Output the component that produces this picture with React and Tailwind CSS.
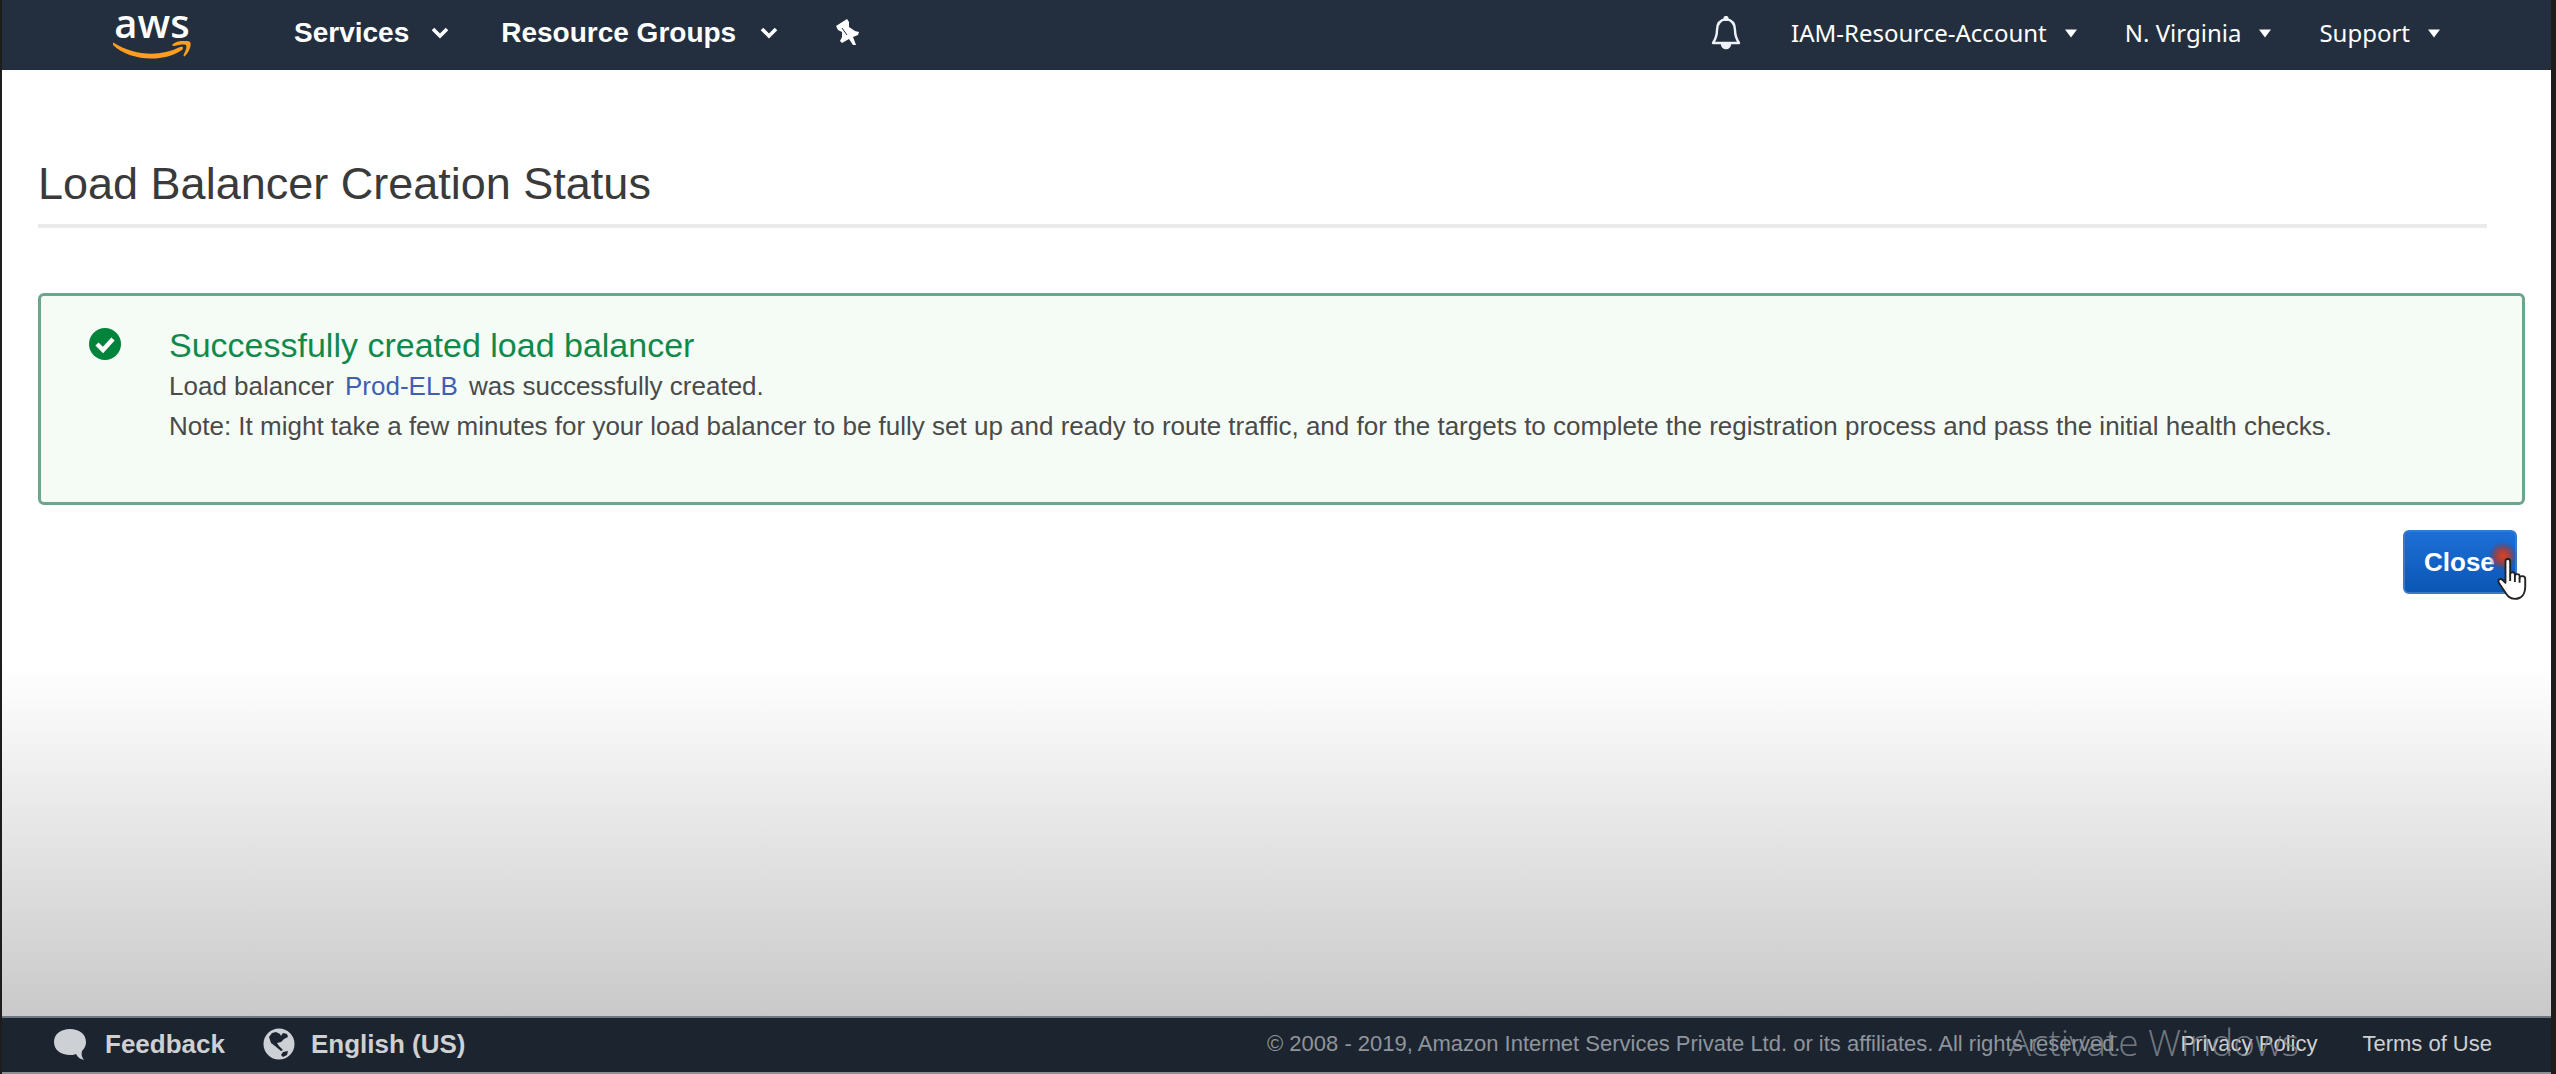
import React from "react";

function Chevron() {
  return (
    <svg viewBox="0 0 18 12" className="h-3 w-[18px]" fill="none" stroke="white" strokeWidth="3.6" aria-hidden="true">
      <path d="M2 2 L9 9 L16 2" />
    </svg>
  );
}

function Caret() {
  return (
    <svg viewBox="0 0 12 9" className="h-[9px] w-3" fill="white" aria-hidden="true">
      <path d="M0 0.5 H12 L6 8.5 Z" />
    </svg>
  );
}

function AwsLogo() {
  return (
    <span className="flex w-[78px] flex-col items-center">
      <span className='h-9 font-["Open_Sans",sans-serif] text-[40px] font-semibold leading-9 text-white'>aws</span>
      <svg viewBox="0 0 78 20" className="h-5 w-[78px]" aria-hidden="true">
        <path d="M1 2 C22 15 47 16 67 6 C70 5 71 7 69 9 C50 22 17 20 0 4 C-1 2 0 1 1 2 Z" fill="#ff9d1e" />
        <path d="M60 3 C65 -1 75 -1 77 1 C79 4 76 11 72 15 C71 16 70 15 71 13 C73 9 74 6 73 4 C71 3 65 4 61 5 C59 5 59 4 60 3 Z" fill="#ff9d1e" />
      </svg>
    </span>
  );
}

function Header() {
  return (
    <header className="flex h-[70px] shrink-0 items-center justify-between bg-[#232f3e] px-[111px] pb-1 text-white">
      <nav className="flex items-center">
        <a href="#home" aria-label="aws"><AwsLogo /></a>
        <button className="ml-[103px] flex items-center gap-[22px] text-[28px] font-bold leading-8">Services <Chevron /></button>
        <button className="ml-[52px] flex items-center gap-6 text-[28px] font-bold leading-8">Resource Groups <Chevron /></button>
        <button className="ml-[58px]" aria-label="Pin shortcuts">
          <svg viewBox="0 0 24 28" className="h-7 w-6" fill="white" aria-hidden="true">
            <path d="M0 7 L11 0 L13 3 L13 8 L19 12 L23 13 L22 16 L17 18 L20 26 L17 26 L13 20 L6 24 L4 22 L6 18 L6 13 L2 11 Z" />
            <path d="M6 9 L11 16" stroke="#232f3e" strokeWidth="1" />
          </svg>
        </button>
      </nav>
      <nav className='flex items-center font-["Noto_Sans",sans-serif] text-[24px] leading-8'>
        <button className="mr-[50px]" aria-label="Notifications">
          <svg viewBox="0 0 30 34" className="h-[34px] w-[30px]" fill="none" stroke="#eef2f8" strokeWidth="2.4" aria-hidden="true">
            <path d="M15 3 C9 4 6 8 6 14 C6 21 4 24 2 27 H28 C26 24 24 21 24 14 C24 8 21 4 15 3 Z" strokeLinejoin="round" />
            <circle cx="15" cy="2.5" r="1.4" fill="#eef2f8" />
            <path d="M11 28 A4 4 0 0 0 19 28 Z" fill="#eef2f8" />
          </svg>
        </button>
        <button className="mr-12 flex items-center gap-[18px]">IAM-Resource-Account <Caret /></button>
        <button className="mr-12 flex items-center gap-[18px]">N. Virginia <Caret /></button>
        <button className="flex items-center gap-[18px]">Support <Caret /></button>
      </nav>
    </header>
  );
}

function Pointer() {
  return (
    <span className="pointer-events-none absolute -right-6 top-3 h-14 w-14">
      <span className="absolute left-1 top-0 h-7 w-7 rounded-full bg-[radial-gradient(circle,#e0401c_0%,#b53a2fcc_35%,#70405050_60%,transparent_75%)]" />
      <svg viewBox="0 0 34 46" className="absolute left-3 top-4 h-11 w-8" aria-hidden="true">
        <path d="M9 3 C9 0 14 0 14 3 V17 C14 14 19 14 19 17 V19 C19 16 24 16 24 19 V21 C24 18 30 18 30 22 V30 C30 38 26 43 19 43 C12 43 10 38 6 32 L2 26 C0 22 4 21 6 23 L9 26 Z" fill="white" stroke="#222" strokeWidth="2" strokeLinejoin="round" />
        <path d="M14 17 V24 M19 19 V25 M24 21 V26" stroke="#222" strokeWidth="2" fill="none" />
      </svg>
    </span>
  );
}

function Main() {
  return (
    <main className="flex-1 bg-[linear-gradient(to_bottom,#ffffff_0%,#ffffff_63%,#c9c9c9_100%)] pl-9 pr-[26px] pt-[90px] text-[#4a4a4a]">
      <h1 className="mr-[38px] border-b-4 border-[#eaeaea] pb-4 text-[45px] leading-[48px] text-[#3a3a3a]">Load Balancer Creation Status</h1>
      <section className="mt-[65px] flex h-[212px] items-start rounded-md border-[3px] border-[#6aa58d] bg-[#f5fcf5] pl-12 pt-7">
        <svg viewBox="0 0 32 32" className="mt-1 size-8 shrink-0" aria-hidden="true">
          <circle cx="16" cy="16" r="16" fill="#00843c" />
          <path d="M8 16 L14 22 L24 11" fill="none" stroke="white" strokeWidth="4.5" />
        </svg>
        <div className="ml-12 text-[26px] leading-10">
          <h2 className="text-[34px] leading-[42px] text-[#0f8a4c]">Successfully created load balancer</h2>
          <p>Load balancer <a href="#elb" className="mx-1 text-[#3f5fb5]">Prod-ELB</a> was successfully created.</p>
          <p>Note: It might take a few minutes for your load balancer to be fully set up and ready to route traffic, and for the targets to complete the registration process and pass the initial health checks.</p>
        </div>
      </section>
      <div className="mt-[25px] flex justify-end pr-2">
        <div className="relative">
          <button className="h-16 w-[114px] rounded-md border-2 border-[#3b78cc] bg-linear-to-b from-[#1d6fd6] to-[#0a56b5] pl-[19px] text-left text-[26px] font-bold text-white">Close</button>
          <Pointer />
        </div>
      </div>
    </main>
  );
}

function Footer() {
  return (
    <footer className="relative flex h-[58px] shrink-0 items-center justify-between border-y-2 border-b-[#8b9097] border-t-[#6f7782] bg-[#1c2430] pb-0.5 pl-[52px] pr-[59px] text-[#cfd0d1]">
      <div className="flex items-center text-[26px] font-bold leading-8">
        <button className="flex items-center gap-[19px]">
          <svg viewBox="0 0 32 34" className="h-[34px] w-8" fill="#cdd0d5" aria-hidden="true">
            <path d="M16 2 C7 2 0 7 0 15 C0 23 7 28 16 28 C18 28 20 28 22 27 C24 31 27 32 30 33 C28 30 27 28 28 24 C31 21 32 18 32 15 C32 7 25 2 16 2 Z" />
          </svg>
          Feedback
        </button>
        <button className="ml-[38px] flex items-center gap-4">
          <svg viewBox="0 0 32 34" className="h-[34px] w-8" aria-hidden="true">
            <circle cx="16" cy="17" r="15.5" fill="#cdd0d5" />
            <path d="M6 10 L9 6 L13 5 L17 7 L18 9 L20 6 L24 7 L25 10 L21 12 L18 15 L14 16 L16 19 L20 23 L18 24 L12 19 L8 16 L7 13 Z" fill="#1c2430" />
            <path d="M18 28 L20 25 L25 24 L24 28 L20 30 Z" fill="#1c2430" />
          </svg>
          English (US)
        </button>
      </div>
      <div className="flex items-center text-[22px] leading-8">
        <span className="text-[#8f959c]">© 2008 - 2019, Amazon Internet Services Private Ltd. or its affiliates. All rights reserved.</span>
        <a href="#privacy" className="ml-[60px]">Privacy Policy</a>
        <a href="#terms" className="ml-[45px]">Terms of Use</a>
      </div>
      <span className='pointer-events-none absolute right-[252px] top-1 font-["Open_Sans",sans-serif] text-[37px] font-light leading-10 text-[#8a9097]/80'>Activate Windows</span>
    </footer>
  );
}

export default function App() {
  return (
    <div className='flex min-h-screen flex-col border-l-2 border-r-[5px] border-[#1e1d1c] font-["Liberation_Sans",Arial,sans-serif]'>
      <Header />
      <Main />
      <Footer />
    </div>
  );
}
